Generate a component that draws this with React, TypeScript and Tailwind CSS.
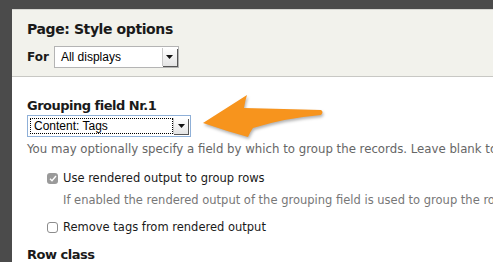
import React from 'react';

function SelectBox({ label, width, focused }: { label: string; width: string; focused?: boolean }) {
  return (
    <div
      className={`flex h-[22px] ${width} items-stretch border bg-white ${
        focused ? 'border-[#8fb0d8] p-[2px]' : 'border-[#b4b4b4] p-[1px]'
      }`}
    >
      <div
        className={`flex flex-1 items-center text-[12px] text-black ${
          focused ? 'border border-dotted border-black pl-[3px]' : 'pl-[5px]'
        }`}
        style={{ fontFamily: '"Liberation Sans", Arial, sans-serif' }}
      >
        {label}
      </div>
      <div className="relative flex w-[15px] items-center justify-center border-l border-[#c8c8c8] bg-gradient-to-b from-[#ffffff] to-[#e4e4e4] shadow-[1px_1px_0_#555]">
        <svg width="7" height="4" viewBox="0 0 7 4">
          <path d="M0 0h7L3.5 4z" fill="#111" />
        </svg>
      </div>
    </div>
  );
}

function Checkbox({ checked }: { checked?: boolean }) {
  return checked ? (
    <span className="flex h-[11px] w-[11px] items-center justify-center rounded-[3px] bg-[#9a9a9a]">
      <svg width="8" height="7" viewBox="0 0 8 7">
        <path d="M1 3.8l2 2L7 1" stroke="#fff" strokeWidth="1.4" fill="none" />
      </svg>
    </span>
  ) : (
    <span className="h-[11px] w-[11px] rounded-[3px] border border-[#8c8c8c] bg-white" />
  );
}

export default function App() {
  const body = { fontFamily: '"DejaVu Sans", Verdana, sans-serif' };
  return (
    <div className="relative h-[262px] w-[493px] overflow-hidden bg-[#4b4b4b] pl-[12px] pt-[9px]" style={body}>
      <div className="h-full border-t border-[#d6d6d2] bg-white">
        {/* header */}
        <div className="h-[67px] border-b border-[#c8c8c4] bg-[#f2f2ec] pl-[15px] pt-[9px]">
          <h1 className="text-[14px] font-bold leading-[20px] tracking-[-0.4px] text-[#1a1a1a]">Page: Style options</h1>
          <div className="mt-[7px] flex items-center gap-[5px]">
            <span className="text-[12px] font-bold text-[#1a1a1a]">For</span>
            <SelectBox label="All displays" width="w-[125px]" />
          </div>
        </div>

        {/* body */}
        <div className="pl-[15px] pt-[20px]">
          <div className="text-[13px] font-bold leading-[18px] tracking-[-0.5px] text-[#1a1a1a]">Grouping field Nr.1</div>
          <SelectBox label="Content: Tags" width="w-[164px]" focused />
          <p className="mt-[3px] whitespace-nowrap text-[11.75px] leading-[18px] text-[#666]">
            You may optionally specify a field by which to group the records. Leave blank to not group.
          </p>

          <div className="pl-[20px] pt-[12px]">
            <label className="flex items-center gap-[5px] whitespace-nowrap text-[11.5px] leading-[16px] text-[#1a1a1a]">
              <Checkbox checked />
              Use rendered output to group rows
            </label>
            <p className="mt-[6px] whitespace-nowrap pl-[16px] text-[11.5px] leading-[16px] text-[#777]">
              If enabled the rendered output of the grouping field is used to group the rows.
            </p>
            <label className="mt-[11px] flex items-center gap-[5px] whitespace-nowrap text-[11.5px] leading-[16px] text-[#1a1a1a]">
              <Checkbox />
              Remove tags from rendered output
            </label>
          </div>

          <div className="mt-[11px] text-[13px] font-bold leading-[18px] tracking-[-0.5px] text-[#1a1a1a]">Row class</div>
        </div>
      </div>

      {/* annotation arrow */}
      <svg
        className="absolute left-[196px] top-[88px] drop-shadow-[1px_2px_1.5px_rgba(0,0,0,0.3)]"
        width="134"
        height="56"
        viewBox="196 88 134 56"
      >
        <path
          d="M203 123 L247 95 Q245 101 244 108 Q285 109 321 110 Q324 112 321 115 Q285 118 253 128 Q250 132 248 137 Q226 131 203 123 Z"
          fill="#f7941d"
        />
      </svg>
    </div>
  );
}
